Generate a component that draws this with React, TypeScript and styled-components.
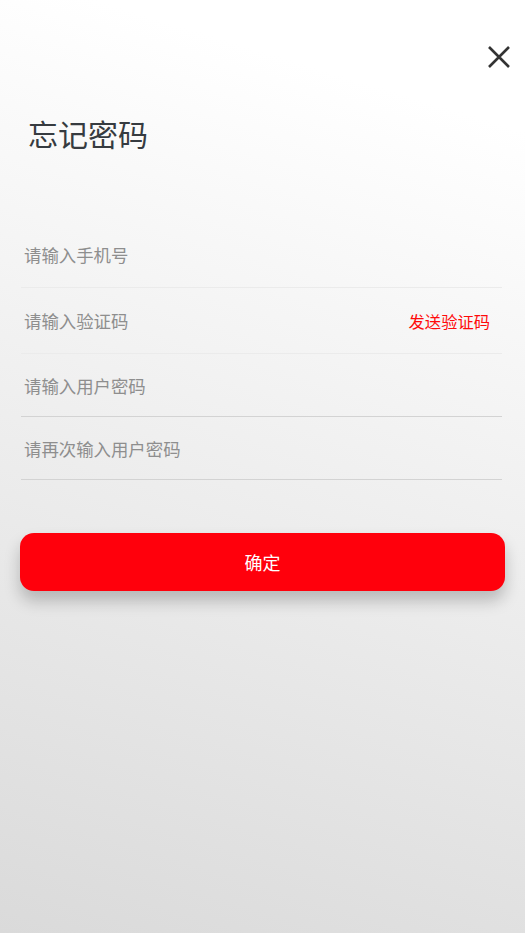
import React, { useState } from 'react';
import styled, { createGlobalStyle } from 'styled-components';

const GlobalStyle = createGlobalStyle`
  html, body {
    margin: 0;
    padding: 0;
  }
  body {
    font-family: "Noto Sans CJK SC", "Noto Sans", sans-serif;
  }
  * {
    box-sizing: border-box;
  }
`;

export default function App() {
  const [phone, setPhone] = useState('');
  const [code, setCode] = useState('');
  const [pwd, setPwd] = useState('');
  const [pwd2, setPwd2] = useState('');

  return (
    <Page>
      <GlobalStyle />
      <TopBar>
        <CloseBtn aria-label="close">
          <svg width="26" height="26" viewBox="0 0 26 26">
            <path d="M3 3 L23 23 M23 3 L3 23" stroke="#333" strokeWidth="2.6" strokeLinecap="butt" />
          </svg>
        </CloseBtn>
      </TopBar>
      <Title>忘记密码</Title>
      <Form>
        <Row height={67} light>
          <Field
            placeholder="请输入手机号"
            value={phone}
            onChange={e => setPhone(e.target.value)}
          />
        </Row>
        <Row height={66} light>
          <Field
            placeholder="请输入验证码"
            value={code}
            onChange={e => setCode(e.target.value)}
          />
          <SendCode>发送验证码</SendCode>
        </Row>
        <Row height={63}>
          <Field
            type="password"
            placeholder="请输入用户密码"
            value={pwd}
            onChange={e => setPwd(e.target.value)}
          />
        </Row>
        <Row height={63}>
          <Field
            type="password"
            placeholder="请再次输入用户密码"
            value={pwd2}
            onChange={e => setPwd2(e.target.value)}
          />
        </Row>
      </Form>
      <Submit>确定</Submit>
    </Page>
  );
}

const Page = styled.div`
  min-height: 100vh;
  padding: 0 20px;
  display: flex;
  flex-direction: column;
  background: linear-gradient(197deg, #ffffff 12%, #dadada 100%);
`;

const TopBar = styled.div`
  display: flex;
  justify-content: flex-end;
  padding-top: 44px;
  margin-right: -7px;
`;

const CloseBtn = styled.button`
  width: 26px;
  height: 26px;
  padding: 0;
  border: none;
  background: transparent;
  display: flex;
  align-items: center;
  justify-content: center;
  cursor: pointer;
`;

const Title = styled.h1`
  margin: 43px 0 0 8px;
  font-size: 30px;
  line-height: 40px;
  font-weight: 400;
  color: #363b40;
`;

const Form = styled.div`
  margin: 68px 3px 0 1px;
  display: flex;
  flex-direction: column;
`;

const Row = styled.div<{ height: number; light?: boolean }>`
  height: ${p => p.height}px;
  display: flex;
  align-items: center;
  padding: 0 12px 0 3px;
  border-bottom: 1px solid ${p => (p.light ? '#ebebeb' : '#d3d3d3')};
`;

const Field = styled.input`
  flex: 1;
  min-width: 0;
  border: none;
  outline: none;
  background: transparent;
  padding: 0;
  font-family: "Noto Sans CJK SC", "Noto Sans", sans-serif;
  font-size: 17.4px;
  color: #333;
  &::placeholder {
    color: #8e8e8e;
  }
`;

const SendCode = styled.span`
  font-size: 16.3px;
  color: #ff0a0a;
  white-space: nowrap;
  cursor: pointer;
`;

const Submit = styled.button`
  margin-top: 53px;
  height: 58px;
  width: 100%;
  border: none;
  border-radius: 14px;
  background: #ff000c;
  color: #fff;
  font-family: "Noto Sans CJK SC", "Noto Sans", sans-serif;
  font-size: 18px;
  box-shadow: 0 10px 16px rgba(0, 0, 0, 0.22);
  cursor: pointer;
`;
